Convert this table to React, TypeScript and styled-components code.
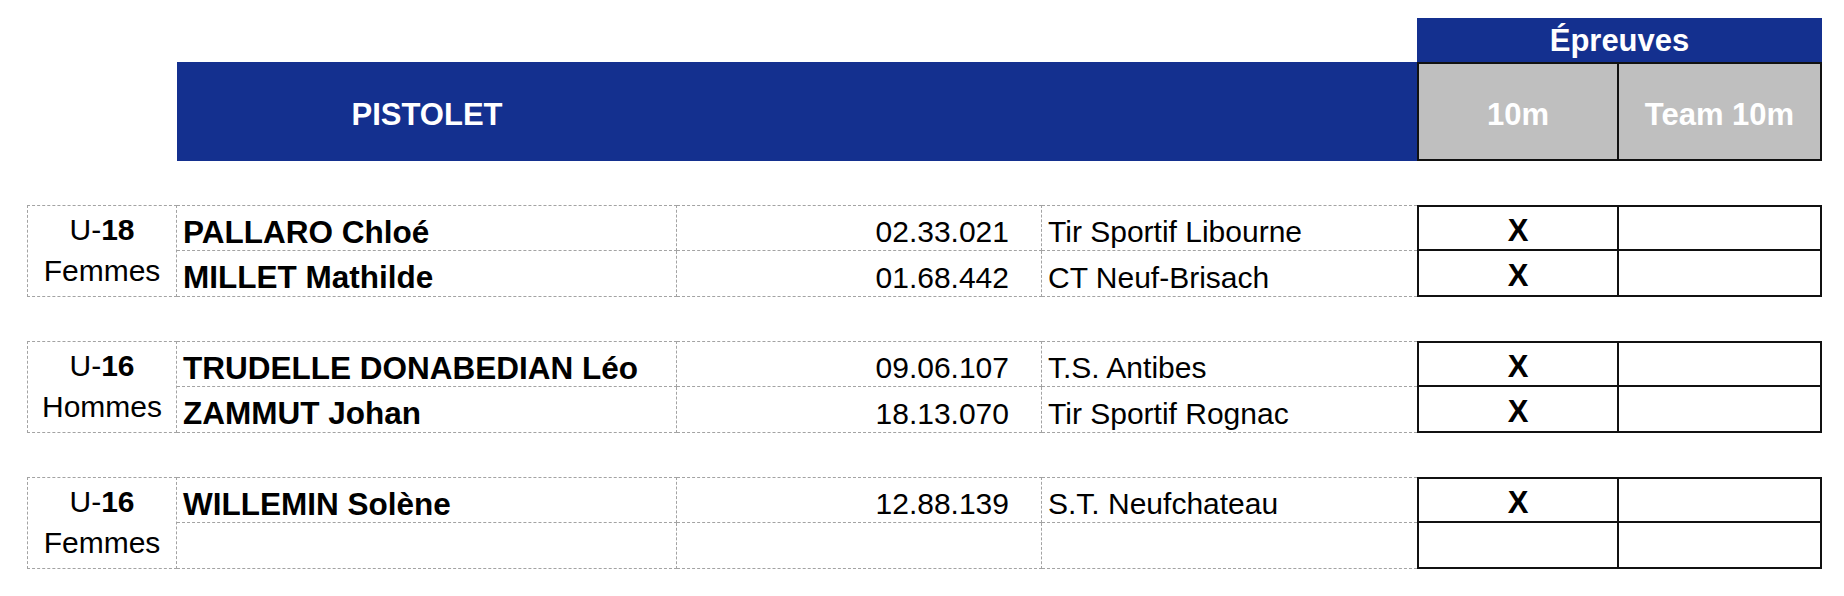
import React from "react";
import styled, { createGlobalStyle } from "styled-components";

const COLS = "150px 500px 365px 375px 202px 203px";
const BLUE = "#14308f";
const DASH = "1px dashed #a3a3a3";
const LINE = "2px solid #111";

const Global = createGlobalStyle`
  html, body { margin: 0; padding: 0; background: #fff; }
  body {
    font-family: "Liberation Sans", Arial, Helvetica, sans-serif;
    color: #000;
  }
  * { box-sizing: border-box; }
`;

const Page = styled.div`
  display: flex;
  flex-direction: column;
  gap: 44px;
  width: 1844px;
  padding: 18px 0 0 27px;
`;

const Header = styled.div`
  display: grid;
  grid-template-columns: ${COLS};
  grid-template-rows: 44px 99px;
`;

const EventsTitle = styled.div`
  grid-column: 5 / 7;
  grid-row: 1;
  background: ${BLUE};
  color: #fff;
  font-weight: 700;
  font-size: 31px;
  display: flex;
  align-items: flex-end;
  justify-content: center;
  padding-bottom: 3px;
`;

const DisciplineBar = styled.div`
  grid-column: 2 / 5;
  grid-row: 2;
  background: ${BLUE};
  display: flex;
  align-items: center;
  padding-top: 6px;
`;

const DisciplineTitle = styled.div`
  width: 500px;
  text-align: center;
  color: #fff;
  font-weight: 700;
  font-size: 31px;
`;

const EventHead = styled.div<{ $col: number }>`
  grid-column: ${(p) => p.$col};
  grid-row: 2;
  background: #bfbfbf;
  color: #fff;
  font-weight: 700;
  font-size: 31px;
  border: ${LINE};
  border-left: ${(p) => (p.$col === 5 ? LINE : "none")};
  display: flex;
  align-items: center;
  justify-content: center;
  padding-top: 6px;
  white-space: nowrap;
`;

const Group = styled.div`
  display: grid;
  grid-template-columns: ${COLS};
  grid-template-rows: 46px 46px;
`;

const CatCell = styled.div`
  grid-column: 1;
  grid-row: 1 / 3;
  border: ${DASH};
  display: flex;
  flex-direction: column;
  justify-content: center;
  padding-bottom: 2px;
  font-size: 30px;
`;

const CatLine = styled.div`
  height: 41px;
  display: flex;
  align-items: center;
  justify-content: center;
  b { font-weight: 700; }
`;

const Cell = styled.div<{ $row: number; $col: number; $right?: boolean; $bold?: boolean; $last?: boolean }>`
  grid-column: ${(p) => p.$col};
  grid-row: ${(p) => p.$row};
  border-bottom: ${DASH};
  border-top: ${(p) => (p.$row === 1 ? DASH : "none")};
  border-right: ${(p) => (p.$last ? "none" : DASH)};
  display: flex;
  align-items: center;
  justify-content: ${(p) => (p.$right ? "flex-end" : "flex-start")};
  padding: ${(p) => (p.$right ? "8px 32px 0 0" : "8px 0 0 6px")};
  font-size: ${(p) => (p.$bold ? "31.5px" : "30px")};
  font-weight: ${(p) => (p.$bold ? 700 : 400)};
  white-space: nowrap;
`;

const Mark = styled.div<{ $row: number; $col: number }>`
  grid-column: ${(p) => p.$col};
  grid-row: ${(p) => p.$row};
  border-right: ${LINE};
  border-bottom: ${LINE};
  border-top: ${(p) => (p.$row === 1 ? LINE : "none")};
  border-left: ${(p) => (p.$col === 5 ? LINE : "none")};
  display: flex;
  align-items: center;
  justify-content: center;
  padding-top: 5px;
  font-size: 31px;
  font-weight: 700;
`;

type Athlete = { name: string; id: string; club: string; ten: boolean; team: boolean };
type GroupData = { age: string; sex: string; athletes: (Athlete | null)[] };

const groups: GroupData[] = [
  {
    age: "18",
    sex: "Femmes",
    athletes: [
      { name: "PALLARO Chloé", id: "02.33.021", club: "Tir Sportif Libourne", ten: true, team: false },
      { name: "MILLET Mathilde", id: "01.68.442", club: "CT Neuf-Brisach", ten: true, team: false },
    ],
  },
  {
    age: "16",
    sex: "Hommes",
    athletes: [
      { name: "TRUDELLE DONABEDIAN Léo", id: "09.06.107", club: "T.S. Antibes", ten: true, team: false },
      { name: "ZAMMUT Johan", id: "18.13.070", club: "Tir Sportif Rognac", ten: true, team: false },
    ],
  },
  {
    age: "16",
    sex: "Femmes",
    athletes: [
      { name: "WILLEMIN Solène", id: "12.88.139", club: "S.T. Neufchateau", ten: true, team: false },
      null,
    ],
  },
];

export default function App() {
  return (
    <>
      <Global />
      <Page>
        <Header>
          <EventsTitle>Épreuves</EventsTitle>
          <DisciplineBar>
            <DisciplineTitle>PISTOLET</DisciplineTitle>
          </DisciplineBar>
          <EventHead $col={5}>10m</EventHead>
          <EventHead $col={6}>Team 10m</EventHead>
        </Header>
        {groups.map((g, gi) => (
          <Group key={gi}>
            <CatCell>
              <CatLine>
                U-<b>{g.age}</b>
              </CatLine>
              <CatLine>{g.sex}</CatLine>
            </CatCell>
            {g.athletes.map((a, i) => {
              const row = i + 1;
              return (
                <React.Fragment key={i}>
                  <Cell $row={row} $col={2} $bold>{a?.name ?? ""}</Cell>
                  <Cell $row={row} $col={3} $right>{a?.id ?? ""}</Cell>
                  <Cell $row={row} $col={4} $last>{a?.club ?? ""}</Cell>
                  <Mark $row={row} $col={5}>{a?.ten ? "X" : ""}</Mark>
                  <Mark $row={row} $col={6}>{a?.team ? "X" : ""}</Mark>
                </React.Fragment>
              );
            })}
          </Group>
        ))}
      </Page>
    </>
  );
}
